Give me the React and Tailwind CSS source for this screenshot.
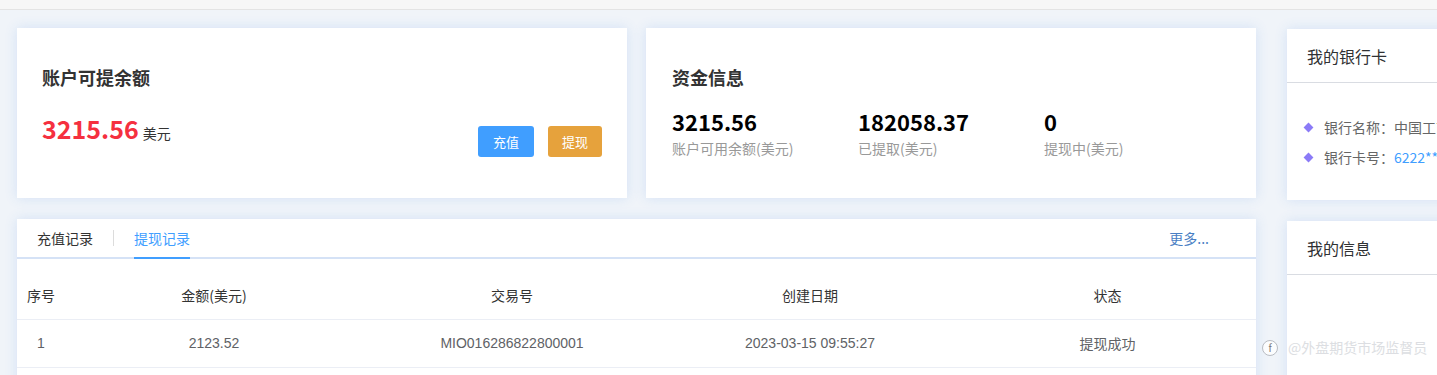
import React from "react";

const cjk = { fontFamily: '"Noto Sans CJK SC", "Noto Sans", sans-serif' };

const stats = [
  { value: "3215.56", label: "账户可用余额(美元)" },
  { value: "182058.37", label: "已提取(美元)" },
  { value: "0", label: "提现中(美元)" },
];

const columns = ["序号", "金额(美元)", "交易号", "创建日期", "状态"];

const rows = [
  ["1", "2123.52", "MIO016286822800001", "2023-03-15 09:55:27", "提现成功"],
];

const Card = ({ className = "", children }) => (
  <div
    className={`bg-white shadow-[0_0_12px_rgba(64,130,230,0.16)] ${className}`}
  >
    {children}
  </div>
);

const SideCard = ({ title, children, className = "" }) => (
  <Card className={`w-[300px] ${className}`}>
    <div className="h-[54px] flex items-center pl-[20px] border-b border-[#d9dce2] text-[16px] text-[#303133]">
      {title}
    </div>
    {children}
  </Card>
);

const App = () => {
  return (
    <div
      className="relative w-[1437px] h-[375px] overflow-hidden bg-[#f0f4f9]"
      style={cjk}
    >
      <div className="h-[10px] bg-[#f7f7f7] border-b border-[#e4e4e4]" />

      <div className="flex pl-[17px] pt-[18px]">
        {/* left area */}
        <div className="flex flex-col w-[1239px] shrink-0">
          <div className="flex gap-[19px]">
            <Card className="w-[610px] h-[170px] px-[25px] pt-[37px]">
              <div className="text-[18px] leading-[24px] font-bold text-[#333]">
                账户可提余额
              </div>
              <div className="flex justify-between items-start mt-[23px]">
                <div className="flex items-baseline">
                  <span className="text-[25px] leading-[32px] font-bold text-[#f5303f]">
                    3215.56
                  </span>
                  <span className="text-[14px] text-[#333] ml-[4px]">美元</span>
                </div>
                <div className="flex gap-[14px] mt-[14px]">
                  <button className="w-[56px] h-[31px] rounded-[3px] bg-[#409eff] text-white text-[13px]">
                    充值
                  </button>
                  <button className="w-[54px] h-[31px] rounded-[3px] bg-[#e6a23c] text-white text-[13px]">
                    提现
                  </button>
                </div>
              </div>
            </Card>

            <Card className="w-[610px] h-[170px] px-[26px] pt-[37px]">
              <div className="text-[18px] leading-[24px] font-bold text-[#333]">
                资金信息
              </div>
              <div className="flex mt-[18px]">
                {stats.map((s) => (
                  <div key={s.label} className="w-[187px] flex flex-col">
                    <span className="text-[22px] leading-[28px] font-bold text-black">
                      {s.value}
                    </span>
                    <span className="text-[14px] leading-[20px] text-[#999] mt-[3px]">
                      {s.label}
                    </span>
                  </div>
                ))}
              </div>
            </Card>
          </div>

          <Card className="mt-[21px] h-[200px]">
            <div className="relative flex items-center h-[40px] border-b-2 border-[#d5e2f6] px-[20px]">
              <span className="text-[14px] text-[#333]">充值记录</span>
              <span className="w-px h-[16px] bg-[#dcdcdc] mx-[20px]" />
              <div className="relative h-full flex items-center">
                <span className="text-[14px] text-[#409eff]">提现记录</span>
                <span className="absolute left-0 right-0 -bottom-[2px] h-[2px] bg-[#409eff]" />
              </div>
              <span className="ml-auto mr-[27px] text-[14px] text-[#4a7fc4]">
                更多...
              </span>
            </div>

            <div className="mt-[13px]">
              <div className="grid grid-cols-[48px_298px_298px_298px_297px] h-[48px] items-center border-b border-[#ebeef5] text-[14px] text-[#333] text-center">
                {columns.map((c) => (
                  <span key={c}>{c}</span>
                ))}
              </div>
              {rows.map((r) => (
                <div
                  key={r[0]}
                  className="grid grid-cols-[48px_298px_298px_298px_297px] h-[48px] items-center border-b border-[#ebeef5] text-[14px] text-[#606266] text-center"
                >
                  {r.map((v, i) => (
                    <span
                      key={i}
                      style={
                        i < 4
                          ? { fontFamily: '"Liberation Sans", Arial, sans-serif' }
                          : undefined
                      }
                    >
                      {v}
                    </span>
                  ))}
                </div>
              ))}
            </div>
          </Card>
        </div>

        {/* right column */}
        <div className="flex flex-col ml-[31px] mt-px shrink-0">
          <SideCard title="我的银行卡" className="h-[171px]">
            <div className="flex flex-col gap-[10px] pt-[34px] pl-[18px]">
              <div className="flex items-center text-[14px] leading-[20px] text-[#666] whitespace-nowrap">
                <span className="w-[7px] h-[7px] rotate-45 bg-[#8b7bf7] mr-[12px]" />
                银行名称：中国工商银行
              </div>
              <div className="flex items-center text-[14px] leading-[20px] text-[#666] whitespace-nowrap">
                <span className="w-[7px] h-[7px] rotate-45 bg-[#8b7bf7] mr-[12px]" />
                银行卡号：<span className="text-[#409eff]">6222********1234</span>
              </div>
            </div>
          </SideCard>
          <SideCard title="我的信息" className="mt-[21px] h-[200px]" />
        </div>
      </div>

      {/* watermark */}
      <div className="absolute left-[1262px] top-[337px] flex items-center gap-[10px] text-[14px] text-[#dcdee2]">
        <span className="w-[16px] h-[16px] rounded-full border border-[#b9bcc2] bg-white/80 flex items-center justify-center text-[10px] text-[#777]">
          f
        </span>
        <span>@外盘期货市场监督员</span>
      </div>
    </div>
  );
};

export default App;
